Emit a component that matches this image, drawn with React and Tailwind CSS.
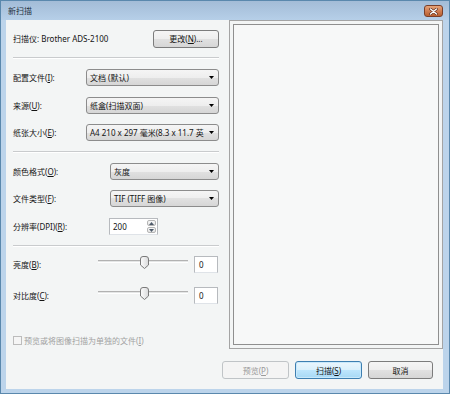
import React from 'react';

const btnBg = "bg-[linear-gradient(#f5f5f5_0%,#eeeeee_50%,#e1e1e1_50%,#d6d6d6_100%)]";

function Key({ k }) {
    return <span className="underline">{k}</span>;
}

function Sep({ className = "" }) {
    return <div className={`${className} h-[2px] border-y border-t-[#c9cbcd] border-b-white`} />;
}

function Combo({ className, children }) {
    return (
        <div className={`${className} h-[17px] flex items-center rounded-[3px] border border-[#8c8c8c] ${btnBg} pl-[3px] pr-[4px]`}>
            <span className="flex-1 whitespace-nowrap leading-[11px]">{children}</span>
            <svg width="5" height="3" viewBox="0 0 5 3" className="ml-[2px] shrink-0">
                <path d="M0 0H5L2.5 3Z" fill="#000" />
            </svg>
        </div>
    );
}

function Slider() {
    return (
        <div className="relative w-[90px] h-[17px]">
            <div className="mt-[4px] h-[3px] border-y border-t-[#b2b2b2] border-b-white bg-[#e4e6e6]" />
            <svg className="absolute left-[42px] top-0" width="9" height="13" viewBox="0 0 9 13">
                <defs>
                    <linearGradient id="th" x1="0" y1="0" x2="1" y2="0">
                        <stop offset="0" stopColor="#fdfdfd" />
                        <stop offset="1" stopColor="#d9dadb" />
                    </linearGradient>
                </defs>
                <path d="M0.5 3 Q0.5 0.5 3 0.5 H6 Q8.5 0.5 8.5 3 V9 L4.5 12.5 L0.5 9 Z" fill="url(#th)" stroke="#7a7a7a" />
            </svg>
        </div>
    );
}

function NumBox({ value }) {
    return (
        <div className="ml-[6px] w-[24px] h-[17px] bg-white border border-[#b7babe] border-b-[#dfe3e8] pl-[4px] flex items-center">
            {value}
        </div>
    );
}

function Button({ className, children }) {
    return (
        <div className={`${className} h-[18px] rounded-[3px] flex items-center justify-center`}>
            {children}
        </div>
    );
}

export default function App() {
    return (
        <div className="w-[450px] h-[394px] border border-[#5a88ad] bg-[#bcd4eb] flex flex-col text-[8px] leading-[11px] text-[#141414] font-['Noto_Sans','Noto_Sans_CJK_SC',sans-serif]">

            {/* title bar */}
            <div className="h-[19px] flex justify-between bg-[linear-gradient(#a3bcd7,#b6cfe8)]">
                <span className="pl-[7px] self-center text-[#26323f]">新扫描</span>
                <div className="mt-[4px] mr-[6px] w-[19px] h-[12px] rounded-[3px] border border-[#7a3f2a] bg-[linear-gradient(#e6a47a,#cd7a4f_55%,#b9602f)] flex items-center justify-center">
                    <svg width="9" height="7" viewBox="0 0 9 7">
                        <path d="M1.5 1 L7.5 6 M7.5 1 L1.5 6" stroke="#5a2a1a" strokeWidth="2.6" strokeLinecap="round" />
                        <path d="M1.5 1 L7.5 6 M7.5 1 L1.5 6" stroke="#fff" strokeWidth="1.4" strokeLinecap="round" />
                    </svg>
                </div>
            </div>

            {/* client */}
            <div className="ml-[5px] mr-[6px] mb-[4px] flex-1 bg-[#f3f5f5] flex flex-col">
                <div className="h-[329px] flex">

                    {/* left settings */}
                    <div className="w-[223px] pl-[7px] pr-[10px] flex flex-col">
                        <div className="mt-[10px] h-[17px] flex items-center justify-between">
                            <span>扫描仪: Brother ADS-2100</span>
                            <Button className={`w-[66px] border border-[#7c7c7c] ${btnBg}`}>
                                更改(<Key k="N" />)...
                            </Button>
                        </div>

                        <Sep className="mt-[10px]" />

                        <div className="mt-[10px] flex items-center">
                            <span className="w-[73px]">配置文件(<Key k="I" />):</span>
                            <Combo className="w-[133px]">文档 (默认)</Combo>
                        </div>
                        <div className="mt-[11px] flex items-center">
                            <span className="w-[73px]">来源(<Key k="U" />):</span>
                            <Combo className="w-[133px]">纸盒(扫描双面)</Combo>
                        </div>
                        <div className="mt-[10px] flex items-center">
                            <span className="w-[73px]">纸张大小(<Key k="E" />):</span>
                            <Combo className="w-[133px]">A4 210 x 297 毫米(8.3 x 11.7 英</Combo>
                        </div>

                        <Sep className="mt-[10px]" />

                        <div className="mt-[10px] flex items-center">
                            <span className="w-[97px]">颜色格式(<Key k="O" />):</span>
                            <Combo className="w-[109px]">灰度</Combo>
                        </div>
                        <div className="mt-[10px] flex items-center">
                            <span className="w-[97px]">文件类型(<Key k="F" />):</span>
                            <Combo className="w-[109px]">TIF (TIFF 图像)</Combo>
                        </div>
                        <div className="mt-[11px] flex items-center">
                            <span className="w-[96px]">分辨率(DPI)(<Key k="R" />):</span>
                            <div className="w-[49px] h-[17px] bg-white border border-[#b7babe] border-b-[#dfe3e8] flex">
                                <span className="flex-1 pl-[3px] self-center">200</span>
                                <div className="w-[11px] flex flex-col gap-px p-px">
                                    <div className="flex-1 rounded-[2px] border border-[#b5b5b5] bg-[linear-gradient(#f8f8f8,#e3e3e3)] flex items-center justify-center">
                                        <svg width="5" height="3" viewBox="0 0 5 3"><path d="M0 3H5L2.5 0Z" fill="#4d5a6a" /></svg>
                                    </div>
                                    <div className="flex-1 rounded-[2px] border border-[#b5b5b5] bg-[linear-gradient(#f8f8f8,#e3e3e3)] flex items-center justify-center">
                                        <svg width="5" height="3" viewBox="0 0 5 3"><path d="M0 0H5L2.5 3Z" fill="#4d5a6a" /></svg>
                                    </div>
                                </div>
                            </div>
                        </div>

                        <Sep className="mt-[10px]" />

                        <div className="mt-[9px] h-[17px] flex items-center">
                            <span className="w-[85px]">亮度(<Key k="B" />):</span>
                            <Slider />
                            <NumBox value="0" />
                        </div>
                        <div className="mt-[14px] h-[17px] flex items-center">
                            <span className="w-[85px]">对比度(<Key k="C" />):</span>
                            <Slider />
                            <NumBox value="0" />
                        </div>

                        <div className="mt-[31px] flex items-center gap-[2px] text-[#a2a2a2]">
                            <div className="w-[9px] h-[9px] border border-[#bcbcbc] bg-[#f5f5f5]" />
                            <span>预览或将图像扫描为单独的文件(<Key k="I" />)</span>
                        </div>
                    </div>

                    {/* preview */}
                    <div className="flex-1 border border-[#a4a4a4] p-[3px] flex">
                        <div className="flex-1 border border-[#8f8f8f] bg-[#f7f8f8]" />
                    </div>
                </div>

                {/* buttons */}
                <div className="mt-[12px] pr-[10px] flex justify-end gap-[6px]">
                    <Button className="w-[67px] border border-[#c0c4c7] bg-[#f4f4f4] text-[#999]">
                        预览(<Key k="P" />)
                    </Button>
                    <Button className="w-[67px] border border-[#3d7fb1] bg-[linear-gradient(#eaf6fd_0%,#d9f0fc_50%,#bee6fd_50%,#a7d9f5_100%)] shadow-[inset_0_0_0_1px_#c9e9fb]">
                        扫描(<Key k="S" />)
                    </Button>
                    <Button className={`w-[65px] border border-[#7c7c7c] ${btnBg}`}>
                        取消
                    </Button>
                </div>
            </div>
        </div>
    );
}
